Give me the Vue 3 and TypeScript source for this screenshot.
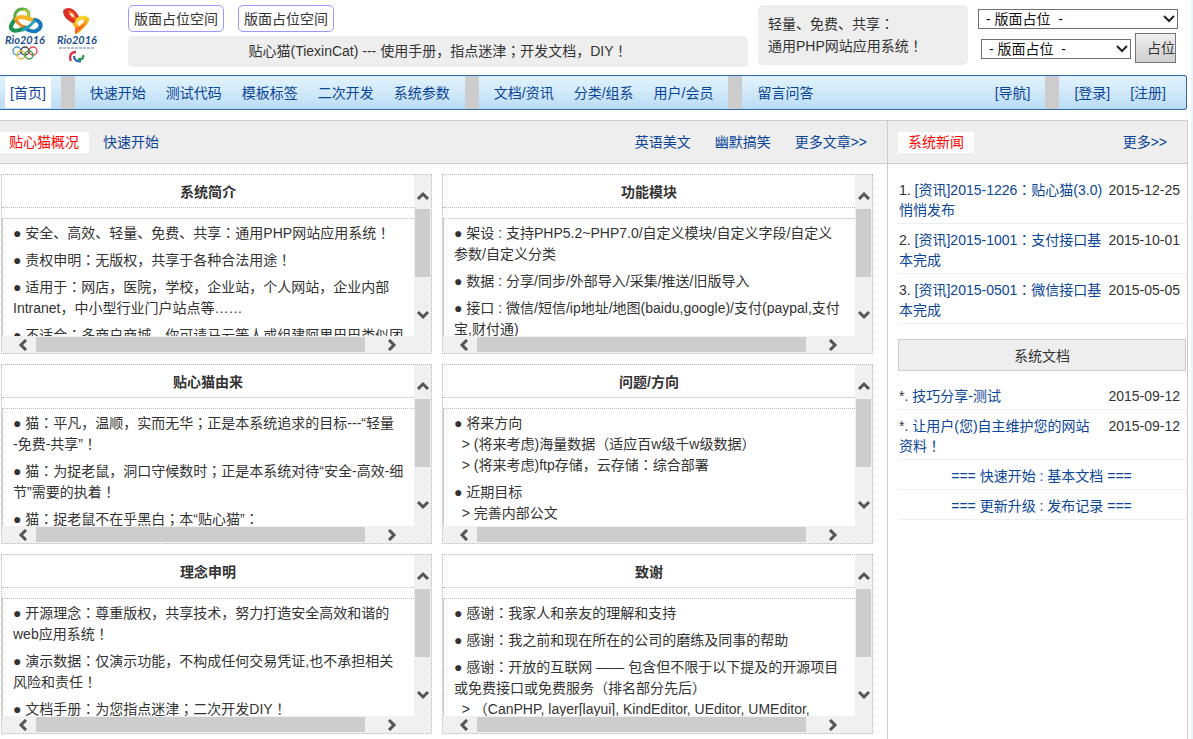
<script setup lang="ts">
import { h, ref } from 'vue'

interface Panel {
  title: string
  items: string[]
}

interface NewsItem {
  mark: string
  title: string
  date: string
}

// Full-width stops are drawn centred in their cell.
const Txt = (props: { t: string }) =>
  props.t
    .split(/([：；！])/)
    .filter((s) => s !== '')
    .map((s) => (/^[：；！]$/.test(s) ? h('span', { class: 'stop' }, s) : s))
Txt.props = ['t']

const navGroups: string[][] = [
  ['快速开始', '测试代码', '模板标签', '二次开发', '系统参数'],
  ['文档/资讯', '分类/组系', '用户/会员'],
  ['留言问答'],
]

const panels: Panel[] = [
  {
    title: '系统简介',
    items: [
      '● 安全、高效、轻量、免费、共享：通用PHP网站应用系统！',
      '● 责权申明：无版权，共享于各种合法用途！',
      '● 适用于：网店，医院，学校，企业站，个人网站，企业内部Intranet，中小型行业门户站点等……',
      '● 不适合：多商户商城，你可请马云等人或组建阿里巴巴类似团队',
    ],
  },
  {
    title: '功能模块',
    items: [
      '● 架设 : 支持PHP5.2~PHP7.0/自定义模块/自定义字段/自定义参数/自定义分类',
      '● 数据 : 分享/同步/外部导入/采集/推送/旧版导入',
      '● 接口 : 微信/短信/ip地址/地图(baidu,google)/支付(paypal,支付宝,财付通)',
    ],
  },
  {
    title: '贴心猫由来',
    items: [
      '● 猫：平凡，温顺，实而无华；正是本系统追求的目标---“轻量\n-免费-共享”！',
      '● 猫：为捉老鼠，洞口守候数时；正是本系统对待“安全-高效-细节”需要的执着！',
      '● 猫：捉老鼠不在乎黑白；本“贴心猫”：',
    ],
  },
  {
    title: '问题/方向',
    items: [
      '● 将来方向\n  > (将来考虑)海量数据（适应百w级千w级数据）\n  > (将来考虑)ftp存储，云存储：综合部署',
      '● 近期目标\n  > 完善内部公文',
    ],
  },
  {
    title: '理念申明',
    items: [
      '● 开源理念：尊重版权，共享技术，努力打造安全高效和谐的web应用系统！',
      '● 演示数据：仅演示功能，不构成任何交易凭证,也不承担相关风险和责任！',
      '● 文档手册：为您指点迷津；二次开发DIY！',
    ],
  },
  {
    title: '致谢',
    items: [
      '● 感谢：我家人和亲友的理解和支持',
      '● 感谢：我之前和现在所在的公司的磨练及同事的帮助',
      '● 感谢：开放的互联网 —— 包含但不限于以下提及的开源项目或免费接口或免费服务（排名部分先后）\n  > （CanPHP, layer[layui], KindEditor, UEditor, UMEditor,',
    ],
  },
]

const news: NewsItem[] = [
  { mark: '1.', title: '[资讯]2015-1226：贴心猫(3.0)悄悄发布', date: '2015-12-25' },
  { mark: '2.', title: '[资讯]2015-1001：支付接口基本完成', date: '2015-10-01' },
  { mark: '3.', title: '[资讯]2015-0501：微信接口基本完成', date: '2015-05-05' },
]

const docs: NewsItem[] = [
  { mark: '*.', title: '技巧分享-测试', date: '2015-09-12' },
  { mark: '*.', title: '让用户(您)自主维护您的网站资料！', date: '2015-09-12' },
]

const docLinks: string[] = ['=== 快速开始 : 基本文档 ===', '=== 更新升级 : 发布记录 ===']

const first = ref('0')
const second = ref('0')
</script>

<template>
  <div class="page">
    <header class="top">
      <div class="logos">
        <svg class="logo" viewBox="0 0 40 58" role="img" aria-label="Rio 2016">
          <g fill="none" stroke-linecap="round" stroke-linejoin="round">
            <path d="M10 15C7 9 11 4 16 4c6 0 8 4 6 9" stroke="#5cab3f" stroke-width="3" />
            <path d="M9 14C7 18 4 20 5 23c2 4 8 3 13 0" stroke="#1f9150" stroke-width="4" />
            <path d="M18 5c4 0 6 4 4 8" stroke="#b5cf35" stroke-width="2" />
            <path d="M10 14c4-3 9-2 13 0 4 1 5 1 7 1" stroke="#f7b522" stroke-width="4" />
            <path d="M10 15c3 5 7 7 11 7" stroke="#ee8a25" stroke-width="3" />
            <path d="M29 15c6 1 7 6 4 9-4 4-10 2-14-1" stroke="#1778bd" stroke-width="4" />
            <path d="M28 16c-3 5-7 7-11 9" stroke="#2aa3b8" stroke-width="3" />
          </g>
          <text x="19" y="39" class="brand" text-anchor="middle">Rio2016</text>
          <g fill="none" stroke-width="1.4">
            <circle cx="11" cy="46" r="4" stroke="#4a94c8" />
            <circle cx="19" cy="46" r="4" stroke="#444" />
            <circle cx="27" cy="46" r="4" stroke="#dd4a55" />
            <circle cx="15" cy="50" r="4" stroke="#eeb63a" />
            <circle cx="23" cy="50" r="4" stroke="#3a9b50" />
          </g>
        </svg>
        <svg class="logo" viewBox="0 0 40 58" role="img" aria-label="Rio 2016">
          <path d="M6 6C8 2 14 2 18 6c3 3 4 6 6 9l-5 5C13 17 6 13 6 6z" fill="#dd2f2a" />
          <path d="M11 6c3-1 6 1 7 4l2 5c-4-1-9-4-9-9z" fill="#f4702a" />
          <path d="M13 8c2 0 4 2 4 4-2 0-4-2-4-4z" fill="#fff" />
          <path d="M16 19c3-4 7-6 10-7 4-1 7 0 6 3-1 5-6 8-9 12l-4 2c-2-1-1-4 0-6-2-1-3-2-3-4z" fill="#f9b120" />
          <path d="M21 12c4-2 10-2 11 2-5-1-10 1-14 6-1-3 0-6 3-8z" fill="#fbd42f" />
          <path d="M20 18c2-3 6-4 7-3 0 3-3 4-5 6z" fill="#fff" />
          <path d="M19 22c4 0 7-2 10-5-1 4-5 7-10 12-2-2-1-5 0-7z" fill="#ef6c25" />
          <text x="20" y="39" class="brand" text-anchor="middle">Rio2016</text>
          <path d="M2 43h35" stroke="#93a8c4" stroke-width="1.4" stroke-dasharray="3 1" />
          <g fill="none" stroke-width="2.4">
            <path d="M19 47c-6 0-7 5-5 9" stroke="#d43b46" />
            <path d="M17 51c0 4 3 6 7 5" stroke="#2d6fb4" />
            <path d="M21 54c4 1 6-1 5-4" stroke="#2b9b5a" />
          </g>
        </svg>
      </div>
      <div class="middle">
        <div class="slots">
          <button type="button" class="slot">版面占位空间</button>
          <button type="button" class="slot">版面占位空间</button>
        </div>
        <div class="notice"><Txt t="贴心猫(TiexinCat) --- 使用手册，指点迷津；开发文档，DIY！" /></div>
      </div>
      <div class="slogan">
        <div><Txt t="轻量、免费、共享：" /></div>
        <div><Txt t="通用PHP网站应用系统！" /></div>
      </div>
      <form class="picker" @submit.prevent>
        <div class="pick wide">
          <select v-model="first" aria-label="版面占位">
            <option value="0">- 版面占位&nbsp; -</option>
          </select>
          <svg class="arrow" viewBox="0 0 12 8"><path d="M1 1l5 5 5-5" /></svg>
        </div>
        <div class="row">
          <div class="pick">
            <select v-model="second" aria-label="版面占位">
              <option value="0">- 版面占位&nbsp; -</option>
            </select>
            <svg class="arrow" viewBox="0 0 12 8"><path d="M1 1l5 5 5-5" /></svg>
          </div>
          <button type="submit" class="go">占位</button>
        </div>
      </form>
    </header>

    <nav class="nav">
      <a href="#" class="home">[首页]</a>
      <template v-for="(group, g) in navGroups" :key="g">
        <i class="sep"></i>
        <a v-for="item in group" :key="item" href="#">{{ item }}</a>
      </template>
      <span class="grow"></span>
      <a href="#">[导航]</a>
      <i class="sep"></i>
      <a href="#">[登录]</a>
      <a href="#">[注册]</a>
    </nav>

    <div class="body">
      <main class="main">
        <div class="bar">
          <a href="#" class="tab on">贴心猫概况</a>
          <a href="#" class="tab">快速开始</a>
          <span class="grow"></span>
          <a href="#" class="more">英语美文</a>
          <a href="#" class="more">幽默搞笑</a>
          <a href="#" class="more">更多文章&gt;&gt;</a>
        </div>
        <div class="panels">
          <section v-for="panel in panels" :key="panel.title" class="panel">
            <div class="view">
              <h2>{{ panel.title }}</h2>
              <ul>
                <li v-for="item in panel.items" :key="item"><Txt :t="item" /></li>
              </ul>
            </div>
            <div class="vbar">
              <svg class="chev up" viewBox="0 0 14 12"><path d="M2 9l5-5 5 5" /></svg>
              <span class="vthumb"></span>
              <svg class="chev down" viewBox="0 0 14 12"><path d="M2 3l5 5 5-5" /></svg>
            </div>
            <div class="hbar">
              <svg class="chev" viewBox="0 0 14 12"><path d="M10 1L5 6l5 5" /></svg>
              <span class="hthumb"></span>
              <svg class="chev right" viewBox="0 0 14 12"><path d="M4 1l5 5-5 5" /></svg>
            </div>
          </section>
        </div>
      </main>

      <aside class="side">
        <div class="bar">
          <a href="#" class="tab on">系统新闻</a>
          <span class="grow"></span>
          <a href="#" class="more">更多&gt;&gt;</a>
        </div>
        <div class="lists">
          <ul class="list">
            <li v-for="item in news" :key="item.title">
              <time>{{ item.date }}</time>
              {{ item.mark }} <a href="#"><Txt :t="item.title" /></a>
            </li>
          </ul>
          <h3>系统文档</h3>
          <ul class="list">
            <li v-for="item in docs" :key="item.title">
              <time>{{ item.date }}</time>
              {{ item.mark }} <a href="#"><Txt :t="item.title" /></a>
            </li>
            <li v-for="link in docLinks" :key="link" class="center">
              <a href="#">{{ link }}</a>
            </li>
          </ul>
        </div>
      </aside>
    </div>
  </div>
</template>

<style>
html {
  background: #e6f7fc;
}
body {
  overflow: hidden;
}
.stop {
  font-family: "Noto Sans CJK JP", sans-serif;
  line-height: 14px;
}
</style>

<style scoped>
* {
  box-sizing: border-box;
}
.page {
  height: 100vh;
  overflow: hidden;
  display: flex;
  flex-direction: column;
  margin-right: 2px;
  padding-right: 3px;
  background: #fff;
  color: #333;
  font: 14px/20px "Liberation Sans", "Noto Sans CJK SC", sans-serif;
  text-spacing-trim: space-all;
}
a {
  color: #0b4597;
  text-decoration: none;
}
ul {
  margin: 0;
  padding: 0;
  list-style: none;
}
button,
select {
  font: inherit;
  color: inherit;
}
.grow {
  flex: 1;
}

.top {
  display: flex;
  height: 75px;
  flex: none;
  padding: 5px 10px 0 6px;
}
.logos {
  display: flex;
  width: 122px;
  flex: none;
  gap: 11px;
}
.logo {
  width: 40px;
  height: 58px;
  overflow: visible;
}
.brand {
  font: italic bold 11px Lato, sans-serif;
  fill: #1d4f8c;
}
.middle {
  flex: 1;
}
.slots {
  display: flex;
  gap: 14px;
}
.slot {
  width: 96px;
  height: 27px;
  padding: 0;
  border: 1px solid #99f;
  border-radius: 5px;
  background: #fff;
  white-space: nowrap;
}
.notice {
  margin-top: 4px;
  height: 31px;
  line-height: 31px;
  border-radius: 5px;
  background: #eee;
  text-align: center;
  white-space: nowrap;
}
.slogan {
  flex: none;
  width: 210px;
  height: 60px;
  margin: 0 10px;
  padding: 8px 10px;
  border-radius: 5px;
  background: #eee;
  line-height: 22px;
}
.picker {
  flex: none;
  width: 200px;
  padding-top: 4px;
}
.row {
  display: flex;
  gap: 4px;
  padding: 4px 2px 0 3px;
}
.pick {
  position: relative;
  width: 150px;
  height: 20px;
  margin-top: 6px;
}
.pick.wide {
  width: 100%;
  margin-top: 0;
}
.pick select {
  display: block;
  width: 100%;
  height: 20px;
  padding: 0 4px 0 7px;
  border: 1px solid #707070;
  border-radius: 0;
  background: #fff;
  color: #111;
  line-height: 18px;
  appearance: none;
}
.arrow {
  position: absolute;
  right: 3px;
  top: 6px;
  width: 12px;
  height: 8px;
  pointer-events: none;
}
.arrow path {
  fill: none;
  stroke: #222;
  stroke-width: 2;
}
.go {
  width: 41px;
  height: 30px;
  padding: 0 0 0 11px;
  border: 1px solid #777;
  background: linear-gradient(#f0f0f0, #cfcfcf);
  text-align: left;
  white-space: nowrap;
  overflow: hidden;
}

.nav {
  display: flex;
  align-items: center;
  flex: none;
  height: 35px;
  margin-right: 1px;
  padding: 0 10px 0 5px;
  border: 1px solid #36a;
  border-left: 0;
  border-radius: 0 3px 3px 0;
  background: linear-gradient(#e0f2fd, #d3eafa 45%, #b9dcf5);
  white-space: nowrap;
}
.nav a {
  padding: 0 10px;
}
.nav .home {
  height: 31px;
  margin-right: 5px;
  padding: 0 5px;
  line-height: 33px;
  background: #fff;
}
.sep {
  width: 14px;
  height: 33px;
  margin: 0 5px;
  background: #ccc;
}

.body {
  display: flex;
  flex: 1;
  min-height: 0;
  margin-top: 10px;
}
.main {
  flex: 1;
  min-width: 0;
}
.bar {
  display: flex;
  align-items: center;
  height: 44px;
  border: 1px solid #ccc;
  border-width: 1px 0;
  background: #eee;
}
.tab {
  height: 21px;
  margin-right: 4px;
  padding: 0 10px;
  line-height: 21px;
}
.main .tab.on {
  padding-left: 9px;
}
.tab.on {
  background: #fff;
  color: #f00;
}
.more {
  margin-right: 20px;
}
.main .more + .more {
  margin-left: 4px;
}
.panels {
  display: grid;
  grid-template-columns: 1fr 1fr;
  gap: 10px;
  padding: 10px 14px 0 1px;
}
.panel {
  display: grid;
  grid-template-columns: minmax(0, 1fr) 17px;
  grid-template-rows: 161px 17px;
  height: 180px;
  border: 1px dotted #bbb;
  background: #f0f0f0;
}
.view {
  overflow: hidden;
  background: #fff;
}
h2 {
  height: 33px;
  margin: 0 0 10px;
  border-bottom: 1px dotted #bbb;
  font-size: 14px;
  font-weight: bold;
  line-height: 34px;
  text-align: center;
}
.view ul {
  padding: 1px 10px;
  border-top: 1px dotted #bbb;
  border-left: 1px solid #ccc;
}
.view li {
  padding: 3px 0;
  line-height: 21px;
  white-space: pre-wrap;
}
.vbar {
  display: flex;
  flex-direction: column;
  align-items: center;
}
.chev {
  flex: none;
  width: 14px;
  height: 12px;
}
.chev path {
  fill: none;
  stroke: #555;
  stroke-width: 3;
}
.up {
  margin: 15px 0 7px;
}
.vthumb {
  flex: none;
  width: 15px;
  height: 68px;
  background: #cdcdcd;
}
.down {
  margin-top: 32px;
}
.hbar {
  grid-column: 1 / 3;
  display: flex;
  align-items: center;
  padding: 0 32px 0 14px;
}
.hthumb {
  flex: 1;
  height: 15px;
  margin: 0 20px 0 6px;
  background: #cdcdcd;
}

.side {
  flex: none;
  width: 301px;
  border: 1px solid #ccc;
  border-width: 0 1px;
}
.side .bar {
  padding-left: 10px;
}
.lists {
  padding: 10px 0 0 10px;
}
.list li {
  min-height: 30px;
  padding: 6px 7px 3px 1px;
  border-bottom: 1px solid #eee;
}
.list time {
  float: right;
  margin-left: 5px;
}
.list .center {
  padding-right: 3px;
  text-align: center;
}
h3 {
  height: 32px;
  margin: 15px 1px 9px 0;
  border: 1px solid #ccc;
  background: #eee;
  font-size: 14px;
  font-weight: normal;
  line-height: 32px;
  text-align: center;
}
</style>
